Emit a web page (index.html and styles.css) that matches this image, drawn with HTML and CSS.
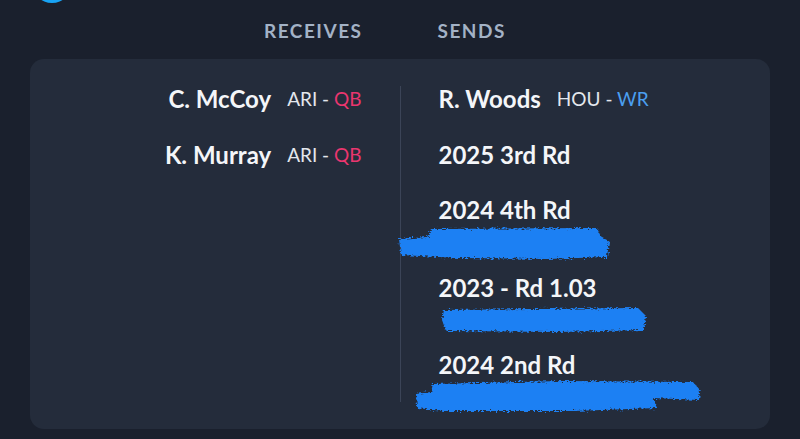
FILE: index.html
```html
<!DOCTYPE html>
<html lang="en">
<head>
    <meta charset="UTF-8">
    <meta name="viewport" content="width=device-width, initial-scale=1.0">
    <title>Trade</title>
    <link rel="stylesheet" href="styles.css">
</head>
<body>
    <svg width="0" height="0" class="defs">
        <filter id="rough">
            <feTurbulence type="fractalNoise" baseFrequency="0.35 0.9" numOctaves="2" seed="3"/>
            <feDisplacementMap in="SourceGraphic" scale="6"/>
        </filter>
    </svg>

    <div class="page">
        <div class="logo"></div>

        <div class="tabs">
            <div class="tab left">RECEIVES</div>
            <div class="tab right">SENDS</div>
        </div>

        <div class="card">
            <div class="side receives">
                <div class="item">
                    <span class="name">C. McCoy</span>
                    <span class="team">ARI - <span class="pos qb">QB</span></span>
                </div>
                <div class="item">
                    <span class="name">K. Murray</span>
                    <span class="team">ARI - <span class="pos qb">QB</span></span>
                </div>
            </div>

            <div class="divider"></div>

            <div class="side sends">
                <div class="item">
                    <span class="name">R. Woods</span>
                    <span class="team">HOU - <span class="pos wr">WR</span></span>
                </div>
                <div class="item">
                    <span class="name">2025 3rd Rd</span>
                </div>
                <div class="item pick">
                    <span class="name">2024 4th Rd</span>
                    <div class="sub">
                        <svg class="scribble s1" width="220" height="40" viewBox="0 0 220 40">
                            <path d="M34 4 L200 3 L204 12 L212 16 L210 32 L150 34 L60 33 L4 30 L2 14 L30 12 Z" filter="url(#rough)"/>
                        </svg>
                    </div>
                </div>
                <div class="item pick">
                    <span class="name">2023 - Rd 1.03</span>
                    <div class="sub">
                        <svg class="scribble s2" width="215" height="32" viewBox="0 0 215 32">
                            <path d="M6 6 L200 4 L208 12 L206 26 L120 28 L8 27 L4 16 Z" filter="url(#rough)"/>
                        </svg>
                    </div>
                </div>
                <div class="item pick">
                    <span class="name">2024 2nd Rd</span>
                    <div class="sub">
                        <svg class="scribble s3" width="292" height="38" viewBox="0 0 292 38">
                            <path d="M20 6 L150 3 L280 4 L287 12 L286 22 L240 20 L244 30 L160 33 L30 33 L4 30 L3 16 L18 14 Z" filter="url(#rough)"/>
                        </svg>
                    </div>
                </div>
            </div>
        </div>
    </div>
</body>
</html>
```

FILE: styles.css
```css
body {
    margin: 0;
    padding: 0;
    background-color: #1a202d;
    font-family: Lato, "Open Sans", sans-serif;
    color: #f3f5f8;
    overflow: hidden;
}

.defs {
    position: absolute;
}

.page {
    padding: 0 30px;
}

.logo {
    width: 40px;
    height: 40px;
    margin: -37px 0 0 2px;
    border-radius: 50%;
    background-color: #18a3f4;
}

/* column headers */
.tabs {
    display: grid;
    grid-template-columns: 1fr 1fr;
    column-gap: 77px;
    padding: 16px 0 16px;
}

.tab {
    font-size: 19px;
    line-height: 24px;
    font-weight: 700;
    letter-spacing: 1.5px;
    color: #a3b2c6;
}

.tab.left {
    justify-self: end;
    margin-right: -1px;
}

.tab.right {
    justify-self: start;
    margin-left: -1px;
}

/* trade card */
.card {
    display: grid;
    grid-template-columns: 1fr 1px 1fr;
    column-gap: 38px;
    padding: 27px 0;
    background-color: #242c3b;
    border-radius: 14px;
    height: 316px;
}

.divider {
    background-color: #3b4457;
}

.side {
    display: flex;
    flex-direction: column;
    gap: 25.5px;
    margin-top: -2px;
}

.receives {
    align-items: flex-end;
}

.sends {
    align-items: flex-start;
}

.item {
    display: flex;
    flex-wrap: wrap;
    align-items: center;
    column-gap: 16px;
}

.name {
    font-size: 24px;
    line-height: 30px;
    font-weight: 700;
    color: #f4f6f9;
    font-variant-numeric: tabular-nums;
}

.team {
    font-size: 19px;
    line-height: 30px;
    color: #e3e7ed;
}

.pos.qb {
    color: #ea366f;
}

.pos.wr {
    color: #4b9ff0;
}

.pick {
    flex-direction: column;
    align-items: flex-start;
}

.sub {
    position: relative;
    height: 22px;
    width: 200px;
}

.scribble {
    position: absolute;
    fill: #1f80f3;
}

.s1 {
    left: -42px;
    top: 0;
}

.s2 {
    left: -1px;
    top: 1px;
}

.s3 {
    left: -26px;
    top: -2px;
}
```
